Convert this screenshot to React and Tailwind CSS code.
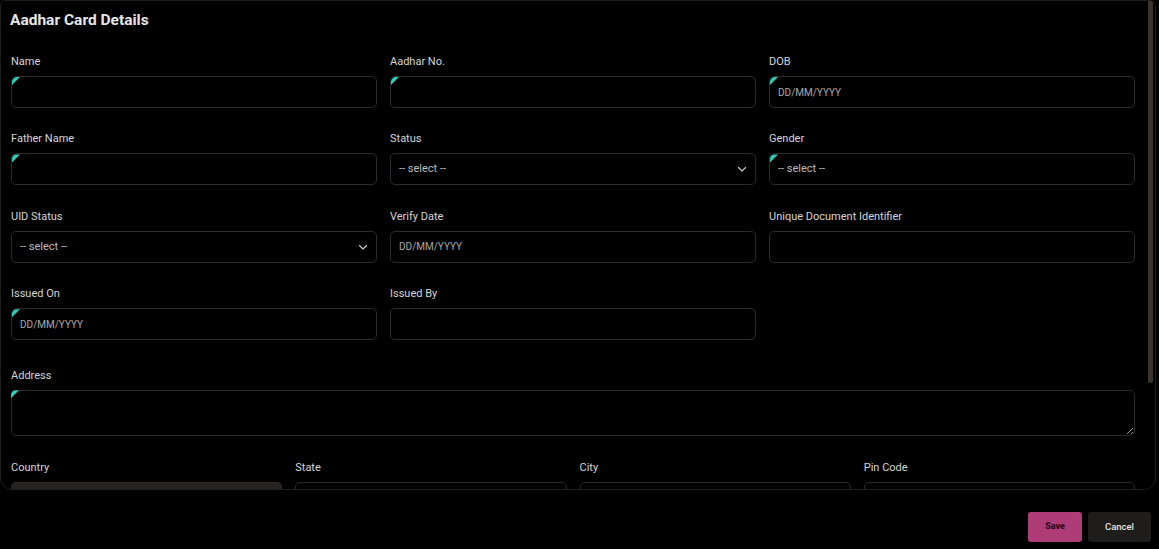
import React from "react";

const font = { fontFamily: "Roboto, 'Liberation Sans', Arial, sans-serif" };

function Marker() {
  return (
    <span className="pointer-events-none absolute left-0 top-0 h-[8px] w-[8px] rounded-tl-[5px] bg-[#2fcab8] [clip-path:polygon(0_0,100%_0,0_100%)]" />
  );
}

function Chevron() {
  return (
    <svg width="10" height="10" viewBox="0 0 10 10" className="text-[#cfcfcf]">
      <path d="M1.5 3.5 L5 7 L8.5 3.5" fill="none" stroke="currentColor" strokeWidth="1.1" strokeLinecap="round" strokeLinejoin="round" />
    </svg>
  );
}

function Field({ label, required, placeholder, select, chevron, disabled }) {
  return (
    <div className="flex flex-col">
      <label className="mb-[7px] text-[11px] leading-[15px] text-[#d6d6d6]">{label}</label>
      <div
        className={`relative flex h-[32px] items-center justify-between rounded-[5px] border border-[#2b2b2b] px-[8px] ${
          disabled ? "bg-[#25221f]" : "bg-black"
        }`}
      >
        {required && <Marker />}
        <span className={`${select ? "text-[11px] text-[#bdbdbd]" : "text-[10px] text-[#a9a9a9]"}`}>
          {placeholder || ""}
        </span>
        {chevron && <Chevron />}
      </div>
    </div>
  );
}

export default function App() {
  return (
    <div className="min-h-[549px] w-[1159px] bg-black [color-scheme:dark]" style={font}>
      <div className="relative h-[490px] w-[1156px] overflow-hidden rounded-b-[12px] rounded-t-[6px] border border-[#1e1e1e]">
        <div className="pl-[10px] pr-[20px] pt-[9px]">
          <h1 className="-ml-[1px] text-[15.5px] font-bold leading-[20px] text-[#e6e6e6]">Aadhar Card Details</h1>
          <div className="mt-[24px] grid grid-cols-3 gap-x-[13px] gap-y-[23.4px]">
            <Field label="Name" required />
            <Field label="Aadhar No." required />
            <Field label="DOB" required placeholder="DD/MM/YYYY" />
            <Field label="Father Name" required />
            <Field label="Status" select chevron placeholder="-- select --" />
            <Field label="Gender" required select placeholder="-- select --" />
            <Field label="UID Status" select chevron placeholder="-- select --" />
            <Field label="Verify Date" placeholder="DD/MM/YYYY" />
            <Field label="Unique Document Identifier" />
            <Field label="Issued On" required placeholder="DD/MM/YYYY" />
            <Field label="Issued By" />
          </div>
          <div className="mt-[28px] flex flex-col">
            <label className="mb-[7px] text-[11px] leading-[15px] text-[#d6d6d6]">Address</label>
            <div className="relative">
              <Marker />
              <textarea className="block h-[46px] w-full resize-y rounded-[5px] border border-[#2b2b2b] bg-black px-2 text-[11px] text-[#ddd] outline-none" />
            </div>
          </div>
          <div className="mt-[24px] grid grid-cols-4 gap-x-[13px]">
            <Field label="Country" disabled />
            <Field label="State" />
            <Field label="City" />
            <Field label="Pin Code" />
          </div>
        </div>
        <div className="absolute right-[2px] top-0 h-[382px] w-[5px] rounded-b-[2px] bg-[#3b342c]" />
      </div>
      <div className="mt-[22px] flex justify-end gap-[6px] pr-[8px]">
        <button className="h-[30px] w-[54px] rounded-[3px] bg-[#ad3c77] text-[9px] font-extrabold text-[#2a0718]">Save</button>
        <button className="h-[30px] w-[63px] rounded-[3px] bg-[#1f1d1b] text-[9.5px] font-medium text-[#e2e2e2]">Cancel</button>
      </div>
    </div>
  );
}
